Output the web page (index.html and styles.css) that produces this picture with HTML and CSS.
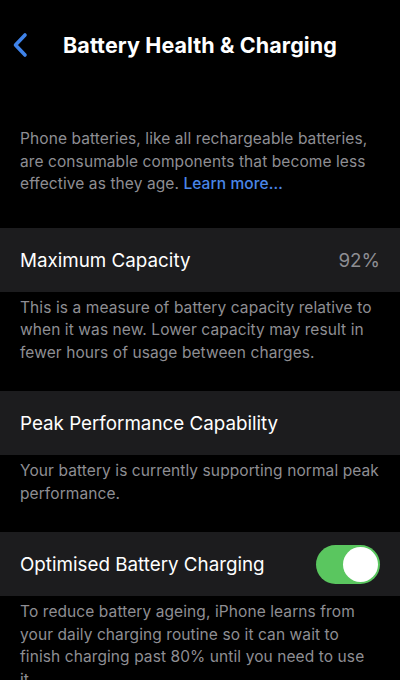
FILE: index.html
```html
<!DOCTYPE html>
<html>
<head>
<meta charset="utf-8">
<link rel="stylesheet" href="styles.css">
</head>
<body>
<div class="screen">
  <div class="nav">
    <svg class="back" width="16" height="26" viewBox="0 0 16 26"><path d="M13 3 L3.5 13 L13 23" fill="none" stroke="#3f83ea" stroke-width="3.6" stroke-linecap="round" stroke-linejoin="round"/></svg>
    <div class="title">Battery Health &amp; Charging</div>
  </div>
  <p class="intro">Phone batteries, like all rechargeable batteries,<br>are consumable components that become less<br>effective as they age. <span class="link">Learn more…</span></p>
  <div class="row"><span class="label">Maximum Capacity</span><span class="value">92%</span></div>
  <p class="desc">This is a measure of battery capacity relative to<br>when it was new. Lower capacity may result in<br>fewer hours of usage between charges.</p>
  <div class="row"><span class="label">Peak Performance Capability</span></div>
  <p class="desc">Your battery is currently supporting normal peak<br>performance.</p>
  <div class="row"><span class="label">Optimised Battery Charging</span><span class="toggle"><span class="knob"></span></span></div>
  <p class="desc last">To reduce battery ageing, iPhone learns from<br>your daily charging routine so it can wait to<br>finish charging past 80% until you need to use<br>it.</p>
</div>
</body>
</html>
```
FILE: styles.css
```css
html, body { margin: 0; padding: 0; background: #000; }
body { font-family: Inter, "Noto Sans", sans-serif; width: 400px; height: 680px; overflow: hidden; }
.screen { width: 400px; height: 680px; overflow: hidden; }
.nav { height: 90px; display: flex; align-items: center; padding-left: 12px; box-sizing: border-box; }
.back { flex: none; }
.title { color: #fff; font-weight: 700; font-size: 21.5px; margin-left: 35px; letter-spacing: 0.1px; }
.intro, .desc { margin: 0; color: #8e8e93; font-size: 15.5px; line-height: 22.5px; padding: 0 20px; letter-spacing: 0.09px; white-space: nowrap; }
.intro { padding-top: 38px; padding-bottom: 32px; }
.link { color: #4a86e8; font-weight: 500; }
.row { height: 64px; background: #1c1c1e; display: flex; align-items: center; justify-content: space-between; padding: 0 20px; box-sizing: border-box; }
.label { color: #fff; font-size: 18.8px; padding-top: 1px; }
.value { color: #8e8e93; font-size: 18.8px; padding-top: 1px; }
.desc { padding-top: 5px; padding-bottom: 27px; }
.toggle { width: 64px; height: 39px; border-radius: 20px; background: #5ac65f; position: relative; }
.knob { position: absolute; right: 2px; top: 2px; width: 35px; height: 35px; border-radius: 50%; background: #fff; }
```
